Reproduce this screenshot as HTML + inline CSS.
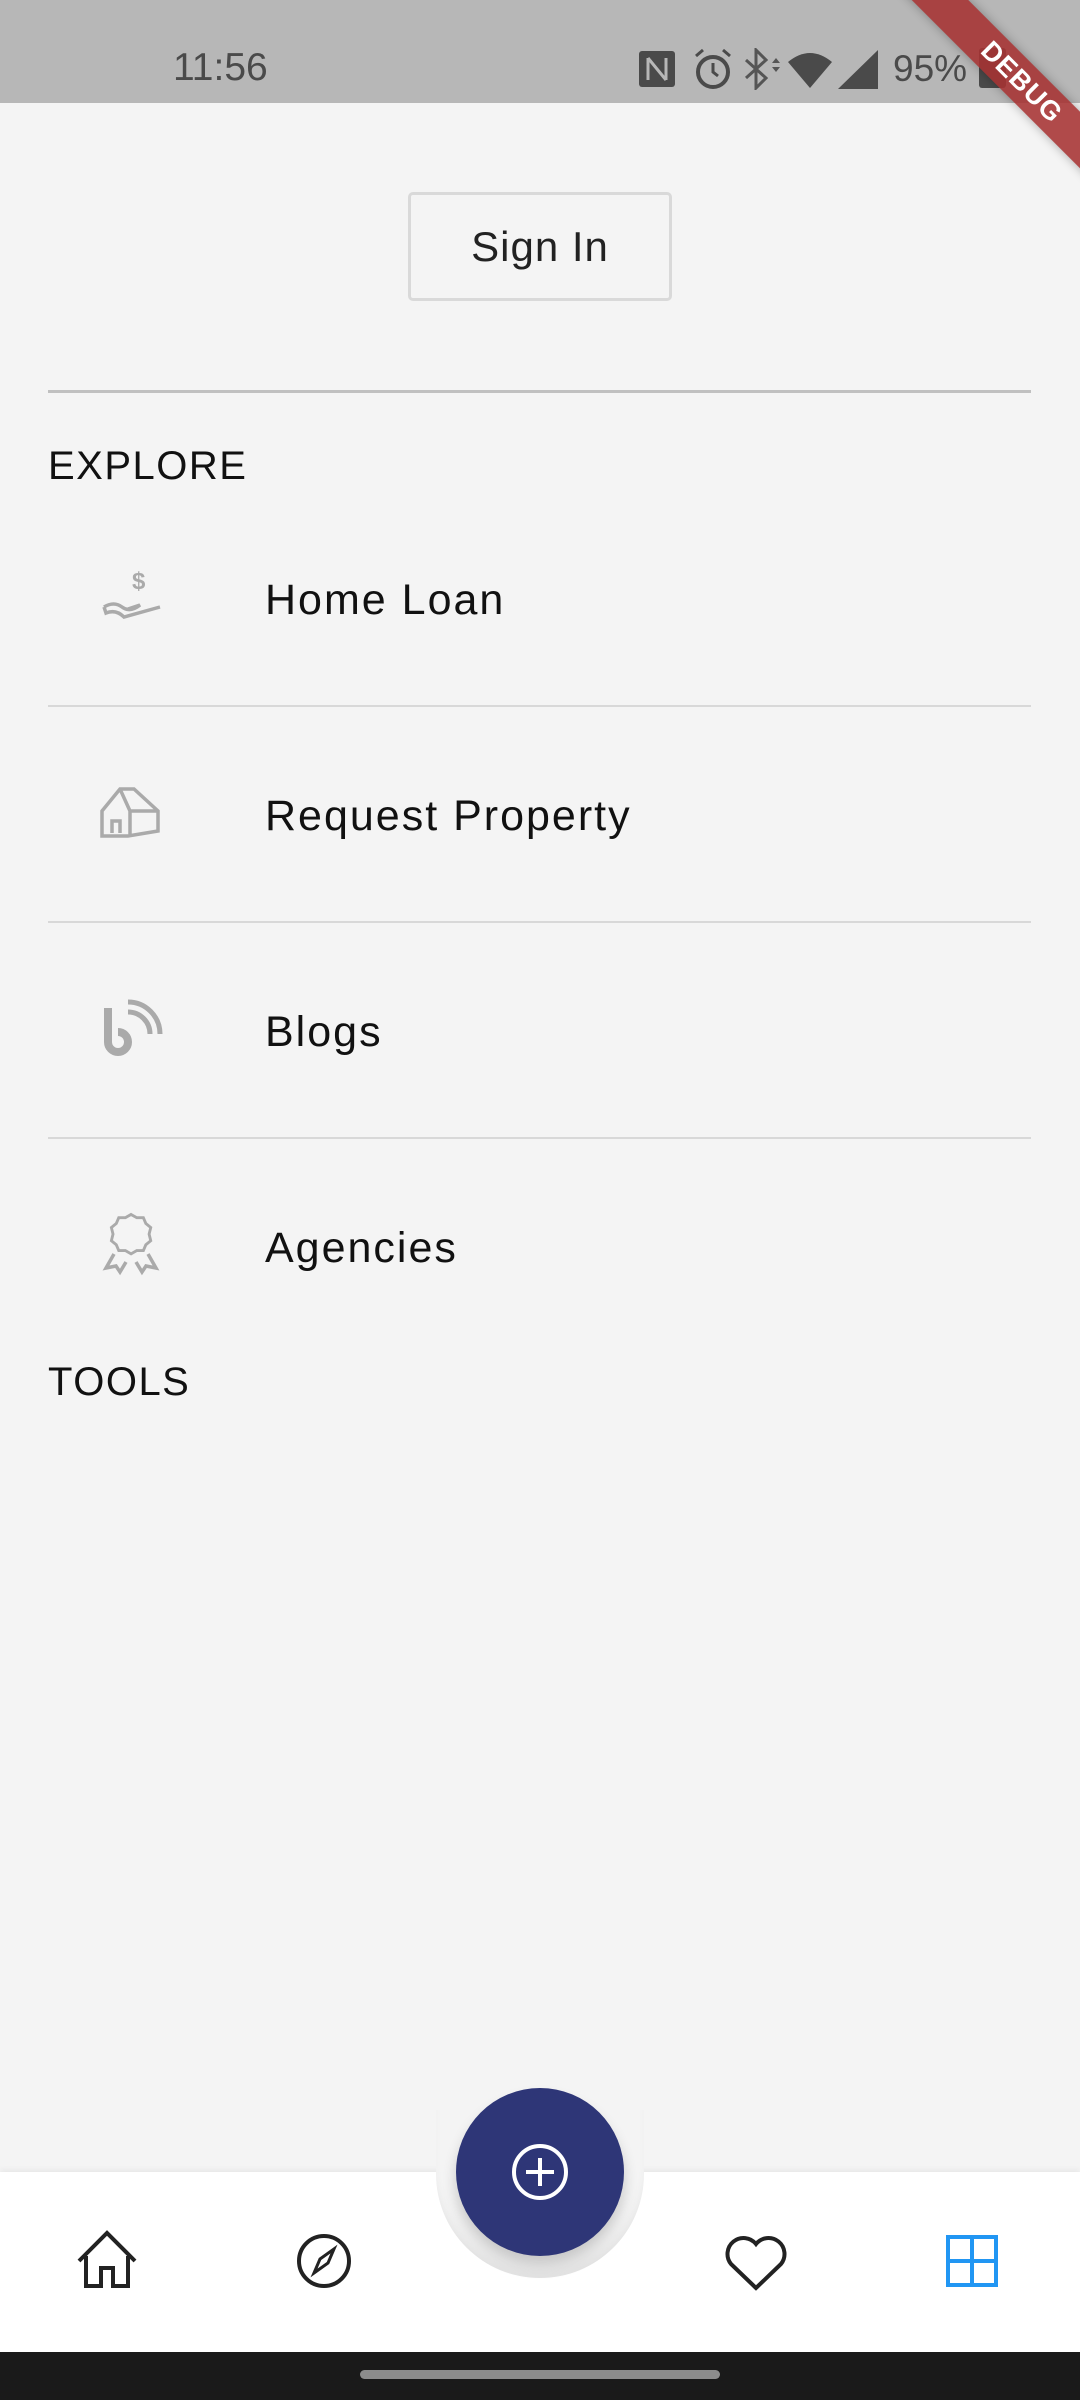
<!DOCTYPE html>
<html><head><meta charset="utf-8"><style>
*{margin:0;padding:0;box-sizing:border-box}
body{width:1080px;height:2400px;background:#f4f4f4;font-family:"Liberation Sans",sans-serif;position:relative;overflow:hidden;color:#111}
.sb{position:absolute;left:0;top:0;width:1080px;height:103px;background:#b7b7b7}
.time{position:absolute;left:173px;top:46px;font-size:39px;color:#4a4a4a}
.pct{position:absolute;left:893px;top:48px;font-size:37px;color:#4a4a4a}
.btn{position:absolute;left:408px;top:192px;width:264px;height:109px;border:3px solid #d9d9d9;border-radius:5px;font-size:42px;letter-spacing:1px;text-align:center;line-height:103px;color:#222}
.hr{position:absolute;left:48px;width:983px;height:2px;background:#d8d8d8}
.sec{position:absolute;left:48px;font-size:40px;letter-spacing:1.5px;color:#111}
.item{position:absolute;left:265px;font-size:43px;letter-spacing:2px;color:#111}
.ic{position:absolute;left:98px}
.nav{position:absolute;left:0;top:2172px;width:1080px;height:180px;background:#fff;box-shadow:0 -2px 6px rgba(0,0,0,.06)}
.bot{position:absolute;left:0;top:2352px;width:1080px;height:48px;background:#1a1a1a}
.handle{position:absolute;left:360px;top:2370px;width:360px;height:9px;border-radius:5px;background:#8c8c8c}
.notch{position:absolute;left:436px;top:2110px;width:208px;height:168px;border-radius:0 0 104px 104px;background:#f4f4f4;box-shadow:inset 0 -14px 12px -6px rgba(0,0,0,.08)}
.fab{position:absolute;left:456px;top:2088px;width:168px;height:168px;border-radius:50%;background:#2e3677;box-shadow:0 10px 14px rgba(0,0,0,.18)}
.ribbon{position:absolute;left:862px;top:62px;width:320px;height:40px;background:rgba(166,50,50,.88);transform:rotate(45deg);color:#fff;font-weight:bold;font-size:27px;text-align:center;line-height:40px;box-shadow:0 0 10px rgba(0,0,0,.3);letter-spacing:1px}
</style></head><body>
<div class="sb">
<div class="time">11:56</div>
<svg style="position:absolute;left:638px;top:50px" width="38" height="38" viewBox="0 0 38 38"><rect x="1" y="1" width="36" height="36" rx="3" fill="#4a4a4a"/><path d="M10 8v22M10 8l18 22M28 8v22" stroke="#b7b7b7" stroke-width="3" fill="none"/></svg>
<svg style="position:absolute;left:693px;top:48px" width="40" height="42" viewBox="0 0 40 42"><circle cx="20" cy="24" r="15" stroke="#4a4a4a" stroke-width="4" fill="none"/><path d="M20 15v9l5 4M3 8l7-6M37 8l-7-6" stroke="#4a4a4a" stroke-width="3" fill="none"/></svg>
<svg style="position:absolute;left:742px;top:48px" width="44" height="42" viewBox="0 0 44 42"><path d="M4 12l20 18-10 10V2l10 10L4 30" stroke="#555" stroke-width="3" fill="none"/><path d="M30 15l4-5 4 5zM30 19l4 5 4-5z" fill="#555"/></svg>
<svg style="position:absolute;left:787px;top:50px" width="48" height="40" viewBox="0 0 48 40"><path d="M1 12Q23-6 45 12L23 38z" fill="#4a4a4a"/></svg>
<svg style="position:absolute;left:838px;top:50px" width="42" height="40" viewBox="0 0 42 40"><path d="M0 39L40 0v39z" fill="#4a4a4a"/></svg>
<div class="pct">95%</div>
<div style="position:absolute;left:979px;top:48px;width:27px;height:40px;background:#4a4a4a;border-radius:3px"></div>
</div>
<div class="ribbon">DEBUG</div>

<div class="btn">Sign In</div>
<div class="hr" style="top:390px;height:3px;background:#c0c0c0"></div>
<div class="sec" style="top:444px">EXPLORE</div>

<svg class="ic" style="top:565px" width="70" height="64" viewBox="0 0 70 64"><text x="34" y="24" font-size="24" font-family="Liberation Sans" font-weight="bold" fill="#aaa">$</text><path d="M6 42q10-6 18 0t18-2l-12 4M6 42l2 6q10-4 18 4l36-10" stroke="#aaa" stroke-width="3.5" fill="none"/></svg>
<div class="item" style="top:576px">Home Loan</div>
<div class="hr" style="top:705px"></div>

<svg class="ic" style="top:785px" width="66" height="56" viewBox="0 0 66 56"><path d="M4 26L22 4h14l24 22v20l-30 5H4zM22 4l10 22h28M32 26v25M14 48V36h8v12" stroke="#aaa" stroke-width="3.5" fill="none"/></svg>
<div class="item" style="top:792px">Request Property</div>
<div class="hr" style="top:921px"></div>

<svg class="ic" style="top:998px" width="66" height="60" viewBox="0 0 66 60"><path d="M10 10v34a10 10 0 1 0 10-10" stroke="#aaa" stroke-width="8" fill="none"/><path d="M30 14a22 22 0 0 1 22 22M30 4a32 32 0 0 1 32 32" stroke="#aaa" stroke-width="5" fill="none"/></svg>
<div class="item" style="top:1008px">Blogs</div>
<div class="hr" style="top:1137px"></div>

<svg class="ic" style="top:1212px" width="66" height="66" viewBox="0 0 66 66"><path d="M33 3l7 4 8 0 3 7 6 5-2 8 2 8-6 5-3 7-8 0-7 4-7-4-8 0-3-7-6-5 2-8-2-8 6-5 3-7 8 0z" stroke="#aaa" stroke-width="3.5" fill="none" transform="translate(6,0) scale(.82)"/><path d="M16 42l-8 14 10-2 4 6 6-10M50 42l8 14-10-2-4 6-6-10" stroke="#aaa" stroke-width="3.5" fill="none"/></svg>
<div class="item" style="top:1224px">Agencies</div>
<div class="sec" style="top:1360px">TOOLS</div>

<div class="nav"></div>
<div class="notch"></div>
<div class="fab"></div>
<svg style="position:absolute;left:510px;top:2141px" width="60" height="62" viewBox="0 0 60 62"><circle cx="30" cy="31" r="26" stroke="#fff" stroke-width="4" fill="none"/><path d="M30 17v28M16 31h28" stroke="#fff" stroke-width="4"/></svg>

<svg style="position:absolute;left:76px;top:2230px" width="62" height="60" viewBox="0 0 62 60"><path d="M3 31L31 3l28 28M10 26v30h15V38h12v18h15V26" stroke="#222" stroke-width="4" fill="none"/></svg>
<svg style="position:absolute;left:296px;top:2233px" width="56" height="56" viewBox="0 0 56 56"><circle cx="28" cy="28" r="25" stroke="#222" stroke-width="4" fill="none"/><path d="M38 16l-14 10-6 14 14-10z" stroke="#222" stroke-width="3" fill="none"/></svg>
<svg style="position:absolute;left:724px;top:2234px" width="64" height="58" viewBox="0 0 64 58"><path d="M32 54L7 30A14 14 0 0 1 32 10a14 14 0 0 1 25 20z" stroke="#222" stroke-width="4" fill="none"/></svg>
<svg style="position:absolute;left:946px;top:2235px" width="52" height="52" viewBox="0 0 52 52"><path d="M2 2h48v48H2zM26 2v48M2 26h48" stroke="#2196f3" stroke-width="4" fill="none"/></svg>

<div class="bot"></div>
<div class="handle"></div>
</body></html>
